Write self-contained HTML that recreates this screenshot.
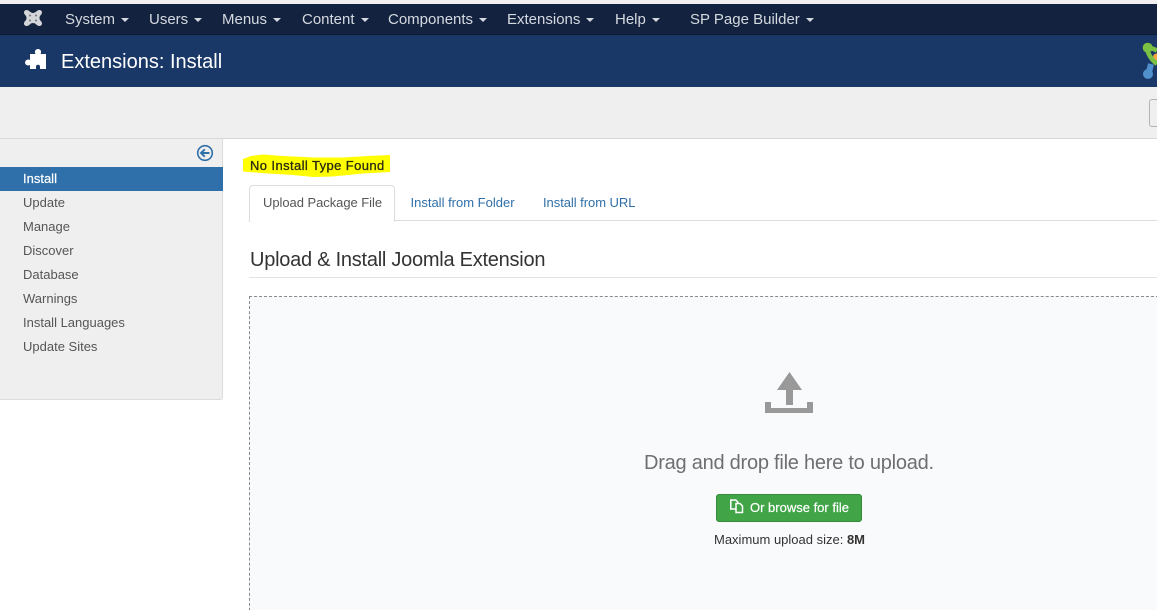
<!DOCTYPE html>
<html><head><meta charset="utf-8"><style>
html,body{margin:0;padding:0;background:#fff;width:1157px;height:610px;overflow:hidden}
#w{width:1157px;height:610px;position:relative;overflow:hidden;font-family:"Liberation Sans",sans-serif;font-size:13px;color:#515151}
.a{position:absolute;white-space:nowrap}
.caret{display:inline-block;width:0;height:0;border-left:4px solid transparent;border-right:4px solid transparent;border-top:4px solid #d5d9e0;margin-left:6px;vertical-align:2px}
.m{top:11px;font-size:15px;line-height:18px;color:#d5d9e0}
.s{left:23px;font-size:13px;line-height:18px;color:#555}
</style></head><body><div id="w">
<div class="a" style="left:0;top:0;width:1157px;height:4px;background:#f0f0f0"></div>
<div class="a" style="left:0;top:4px;width:1157px;height:30px;background:#13233f;border-bottom:1px solid #0e1a30"></div>
<div class="a" style="left:0;top:35px;width:1157px;height:52px;background:#1a3867"></div>
<svg class="a" style="left:24px;top:10px" width="18" height="16" viewBox="0 0 18 16"><path fill="#d4d5d9" d="M2.500 0C4 0 5 .8 6 1.800 7 2.600 8 3 9 3s2-.4 3-1.200C13 .8 14 0 15.500 0 17 0 18 1.200 18 2.500c0 1.300-.8 2.200-1.600 3C15.800 6.200 15.500 7 15.500 8s.3 1.800.9 2.500c.8.800 1.600 1.700 1.600 3 0 1.300-1 2.500-2.500 2.500-1.500 0-2.500-.8-3.500-1.800-1-.8-2-1.200-3-1.200s-2 .4-3 1.200C5 15.200 4 16 2.500 16 1 16 0 14.800 0 13.500c0-1.300.8-2.200 1.600-3 .6-.7.900-1.500.9-2.500s-.3-1.800-.9-2.500C.8 4.700 0 3.800 0 2.500 0 1.200 1 0 2.500 0z"/><g fill="#6d7280"><circle cx="6" cy="5.500" r="1"/><circle cx="12" cy="5.500" r="1"/><circle cx="6" cy="10.500" r="1"/><circle cx="12" cy="10.500" r="1"/></g></svg>
<div class="a m" style="left:65px">System<i class="caret"></i></div>
<div class="a m" style="left:149px">Users<i class="caret"></i></div>
<div class="a m" style="left:222px">Menus<i class="caret"></i></div>
<div class="a m" style="left:302px">Content<i class="caret"></i></div>
<div class="a m" style="left:388px">Components<i class="caret"></i></div>
<div class="a m" style="left:507px">Extensions<i class="caret"></i></div>
<div class="a m" style="left:615px">Help<i class="caret"></i></div>
<div class="a m" style="left:690px">SP Page Builder<i class="caret"></i></div>
<svg class="a" style="left:25px;top:49px" width="21" height="20" viewBox="0 0 21 20"><path fill="#fff" d="M5 5h5.500C10 4 9.800 3.200 10 2.200 10.300.8 11.700 0 13 0s2.700.8 3 2.200c.2 1 0 1.800-.5 2.800H21v15h-6v-2.500c0-1-.8-1.700-2-1.700s-2 .7-2 1.700V20H5v-4c-1 .5-1.800.600-2.800.300C.9 15.900 0 14.800 0 13.500s.9-2.400 2.200-2.800c1-.3 1.800-.2 2.800.3z"/></svg>
<div class="a" style="left:61px;top:48px;font-size:20px;line-height:28px;color:#fff">Extensions: Install</div>
<svg class="a" style="left:1140px;top:40px" width="17" height="42" viewBox="0 0 17 42"><circle cx="16.500" cy="17" r="3.500" fill="#f9a541"/><path d="M8.500 34L11 24" stroke="#5091cd" stroke-width="6" fill="none"/><circle cx="8" cy="34" r="5" fill="#5091cd"/><path d="M8 8C12 8 15 9 17 11" stroke="#7ac143" stroke-width="4.500" fill="none"/><path d="M7 8C8 15 12 20 17 24" stroke="#7ac143" stroke-width="4.500" fill="none"/><circle cx="7.700" cy="7.700" r="5" fill="#7ac143"/></svg>

<div class="a" style="left:0;top:87px;width:1157px;height:51px;background:#efefef;border-bottom:1px solid #d8d8d8"></div>
<div class="a" style="left:1149px;top:99px;width:20px;height:26px;background:#efefef;border:1px solid #b3b3b3;border-radius:3px"></div>

<div class="a" style="left:0;top:139px;width:222px;height:260px;background:#efefef;border-right:1px solid #dcdcdc;border-bottom:1px solid #dcdcdc;border-radius:0 0 3px 0"></div>
<svg class="a" style="left:196px;top:144px" width="18" height="18" viewBox="0 0 18 18"><circle cx="9" cy="9" r="7.300" fill="none" stroke="#2f6fa8" stroke-width="1.600"/><path d="M13.500 9H5.500M8.800 5.300L5 9l3.800 3.700" fill="none" stroke="#2f6fa8" stroke-width="1.900"/></svg>
<div class="a" style="left:0;top:167px;width:223px;height:24px;background:#2f70aa"></div>
<div class="a s" style="top:170px;color:#fff;-webkit-text-stroke:.2px #fff">Install</div>
<div class="a s" style="top:194px">Update</div>
<div class="a s" style="top:218px">Manage</div>
<div class="a s" style="top:242px">Discover</div>
<div class="a s" style="top:266px">Database</div>
<div class="a s" style="top:290px">Warnings</div>
<div class="a s" style="top:314px">Install Languages</div>
<div class="a s" style="top:338px">Update Sites</div>

<svg class="a" style="left:243px;top:153px" width="148" height="25" viewBox="0 0 148 25"><path fill="#ffff00" d="M0 6L8 3 20 1.500 40 3 70 4.500 100 4.500 125 3 147 2 147 19 120 20.500 90 23.500 70 24 50 22 25 20.500 0 18.500z"/></svg>
<div class="a" style="left:250px;top:157px;font-size:13px;line-height:18px;color:#2a2a10;letter-spacing:.4px;-webkit-text-stroke:.3px #2a2a10">No Install Type Found</div>

<div class="a" style="left:249px;top:220px;width:908px;height:1px;background:#ddd"></div>
<div class="a" style="left:249px;top:185px;width:144px;height:36px;background:#fff;border:1px solid #ddd;border-bottom:0;border-radius:4px 4px 0 0"></div>
<div class="a" style="left:263px;top:194px;font-size:13px;line-height:18px;color:#555;letter-spacing:-.05px">Upload Package File</div>
<div class="a" style="left:410.500px;top:194px;font-size:13px;line-height:18px;color:#2f6fa8">Install from Folder</div>
<div class="a" style="left:543px;top:194px;font-size:13px;line-height:18px;color:#2f6fa8;letter-spacing:-.05px">Install from URL</div>

<div class="a" style="left:250px;top:247px;font-size:20px;line-height:26px;color:#333;letter-spacing:-.25px">Upload &amp; Install Joomla Extension</div>
<div class="a" style="left:249px;top:277px;width:908px;height:1px;background:#e3e3e3"></div>

<div class="a" style="left:249px;top:296px;width:920px;height:330px;box-sizing:border-box;background:#f9fafc;border:1px dashed #8a8a8a"></div>
<svg class="a" style="left:765px;top:372px" width="48" height="41" viewBox="0 0 48 41"><path fill="#999" d="M24.500 0L12 18h9v15h7V18h9zM0 30h6v6h36v-6h6v11H0z"/></svg>
<div class="a" style="left:644px;top:450px;font-size:20px;line-height:26px;color:#6f6f6f;letter-spacing:-.24px">Drag and drop file here to upload.</div>
<div class="a" style="left:716px;top:494px;width:146px;height:28px;box-sizing:border-box;background:#41a547;border:1px solid #378a3c;border-radius:3px"></div>
<svg class="a" style="left:729px;top:499px" width="16" height="15" viewBox="0 0 16 15"><g fill="#41a547" stroke="#fff" stroke-width="1.500"><path d="M1.800 1h5l2 2v7h-7z"/><path d="M7 4.500h4l2.500 2.500v6.500H7z"/></g></svg>
<div class="a" style="left:750px;top:499px;font-size:13px;line-height:18px;color:#fff;-webkit-text-stroke:.2px #fff">Or browse for file</div>
<div class="a" style="left:714px;top:531px;font-size:13px;line-height:18px;color:#333">Maximum upload size: <b>8M</b></div>
</div></body></html>
